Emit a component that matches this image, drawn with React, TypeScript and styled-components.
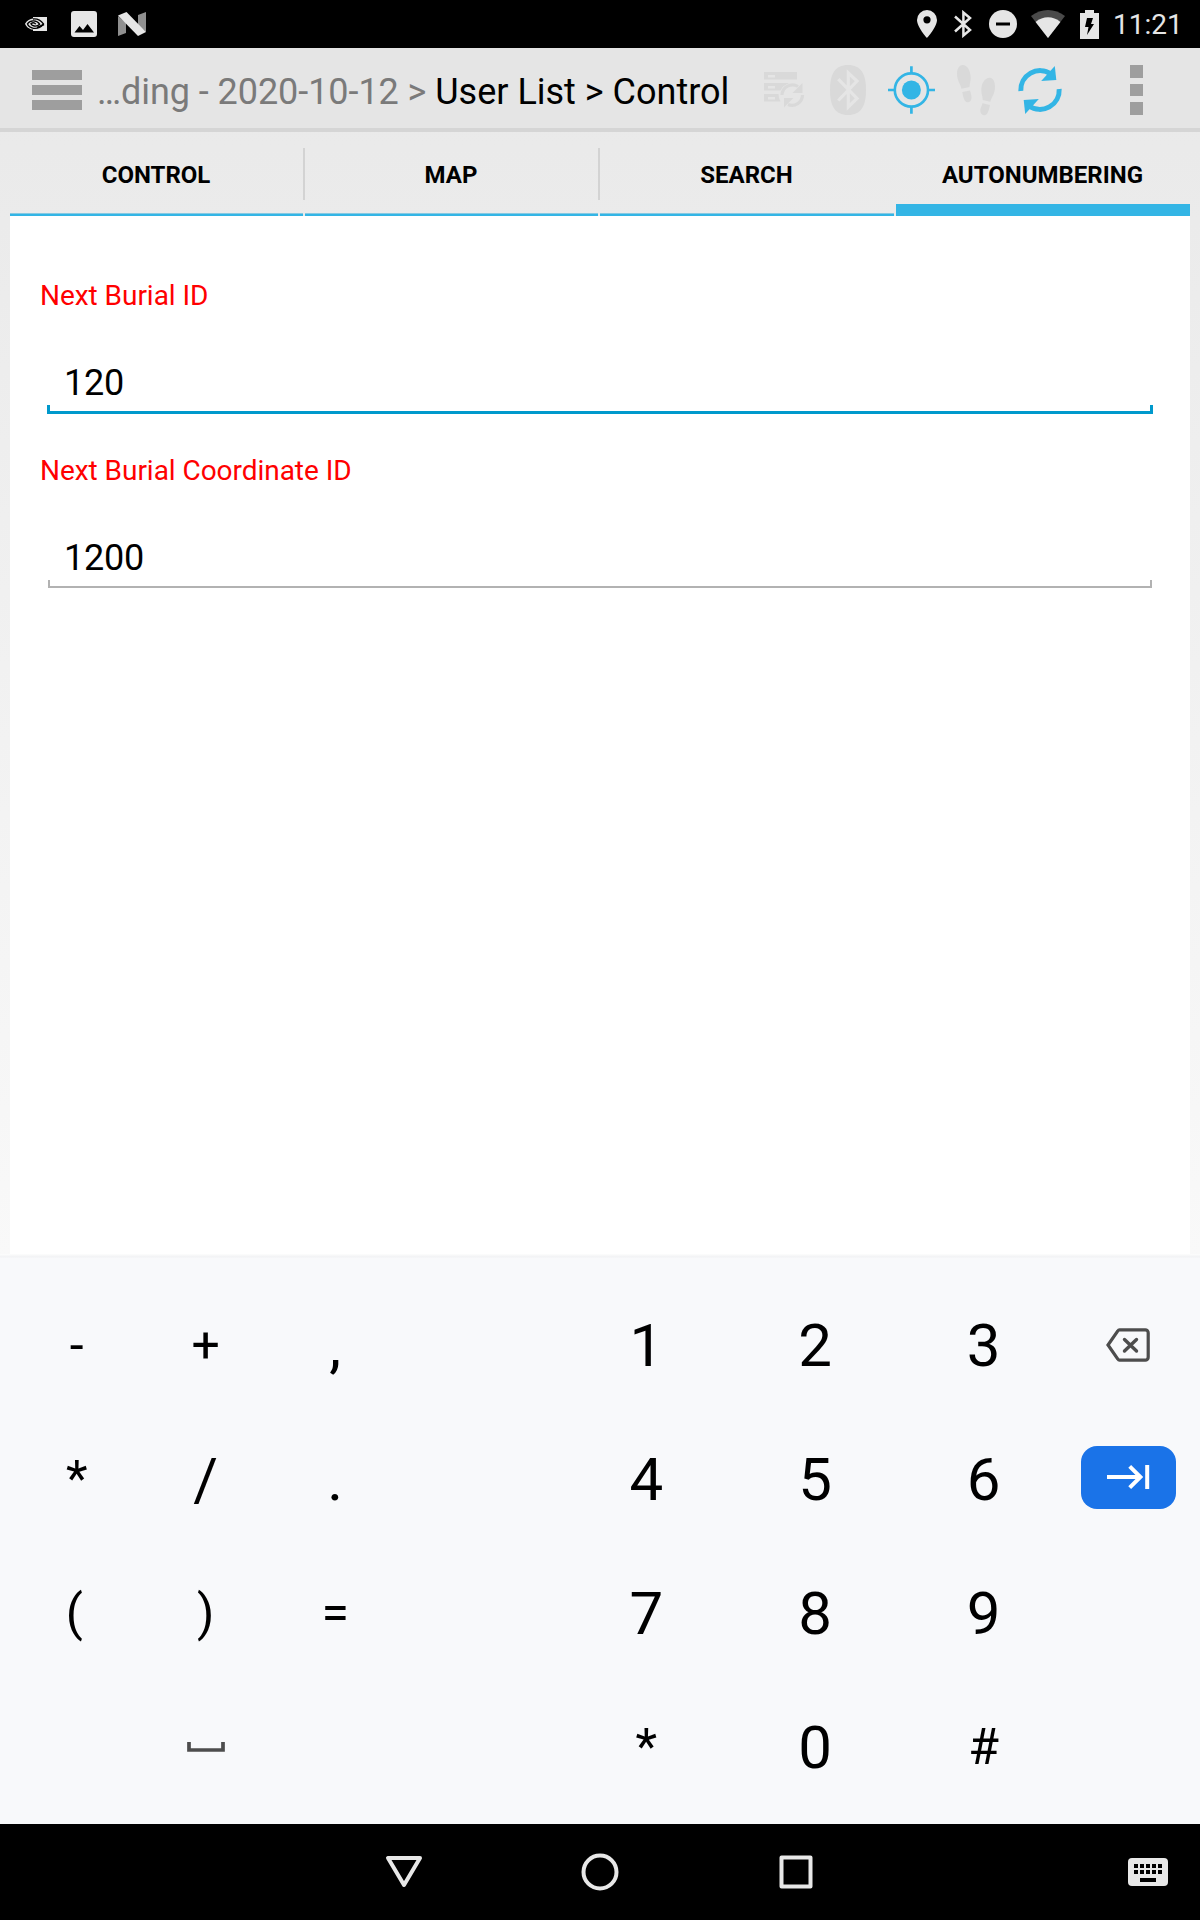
import React from "react";
import styled, { createGlobalStyle } from "styled-components";

const GlobalStyle = createGlobalStyle`
  *, *::before, *::after { box-sizing: border-box; }
  body { margin: 0; background: #000; }
`;

const Screen = styled.div`
  display: flex;
  flex-direction: column;
  width: 1200px;
  height: 1920px;
  overflow: hidden;
  font-family: Roboto, "Liberation Sans", sans-serif;
  color: #000;
  background: linear-gradient(#e8e8e8, #f9f9f9 1258px);
`;

const StatusBar = styled.div`
  display: flex;
  justify-content: space-between;
  height: 48px;
  padding: 0 16px 0 25px;
  background: #000;
`;

const StatusGroup = styled.div`
  display: flex;
  align-items: center;
`;

const StatusIcon = styled.svg<{ $gap?: number }>`
  display: block;
  flex: none;
  margin-right: ${(p) => p.$gap ?? 0}px;
  fill: #e6e6e6;
`;

const Clock = styled.span`
  width: 71px;
  font-size: 28px;
  line-height: 48px;
  color: #e6e6e6;
  padding-top: 2px;
`;

const ActionBar = styled.header`
  display: flex;
  height: 84px;
  background: #e5e5e5;
  border-bottom: 4px solid #d5d5d5;
`;

const MenuButton = styled.div`
  display: flex;
  flex-direction: column;
  gap: 5px;
  width: 97px;
  padding: 22px 0 0 32px;
`;

const MenuLine = styled.span`
  width: 50px;
  height: 10px;
  background: #9e9e9e;
`;

const Breadcrumb = styled.div`
  flex: 1;
  font-size: 36px;
  line-height: 42px;
  padding-top: 23px;
  white-space: nowrap;
`;

const Crumb = styled.span<{ $muted?: boolean }>`
  color: ${(p) => (p.$muted ? "#7a7a7a" : "#000")};
  letter-spacing: ${(p) => (p.$muted ? "-0.06px" : "0")};
`;

const Actions = styled.div`
  display: flex;
`;

const ActionIcon = styled.svg`
  display: block;
  width: 64px;
  height: 80px;
`;

const Overflow = styled.div`
  display: flex;
  flex-direction: column;
  align-items: center;
  gap: 6px;
  width: 128px;
  padding-top: 17px;
`;

const OverflowDot = styled.span`
  width: 13px;
  height: 12.7px;
  background: #9e9e9e;
`;

const Tabs = styled.nav`
  display: grid;
  grid-template-columns: 293px 293px 294px 294px;
  column-gap: 2px;
  height: 84px;
  margin: 0 10px;
`;

const Tab = styled.div<{ $active?: boolean }>`
  position: relative;
  display: flex;
  justify-content: center;
  padding: 29px 1px 0 0;
  font-size: 24px;
  line-height: 28px;
  font-weight: 700;
  border-bottom: ${(p) => (p.$active ? 12 : 2)}px solid #33b5e5;
  box-shadow: ${(p) => (p.$active ? "none" : "inset 0 -1px #85c9e2")};

  & + &::before {
    content: "";
    position: absolute;
    left: -2px;
    top: 16px;
    width: 2px;
    height: 52px;
    background: #d3d3d3;
  }
`;

const Form = styled.main`
  flex: 1;
  margin: 0 10px;
  padding: 63px 37px 0 30px;
  background: #fff;
`;

const Field = styled.div`
  height: 175px;
`;

const Label = styled.div`
  font-size: 28px;
  line-height: 34px;
  letter-spacing: -0.04px;
  color: #f00;
`;

const Value = styled.div<{ $focused?: boolean }>`
  height: ${(p) => (p.$focused ? 101 : 100)}px;
  margin: 0 ${(p) => (p.$focused ? "0 0 7px" : "1px 0 8px")};
  padding: 49px 0 0 ${(p) => (p.$focused ? 17 : 16)}px;
  font-size: 36px;
  line-height: 42px;
  letter-spacing: -0.2px;
  --line: ${(p) => (p.$focused ? "#0099cc" : "#b2b2b2")};
  --w: ${(p) => (p.$focused ? 3 : 2)}px;
  --tick: ${(p) => (p.$focused ? 9 : 8)}px;
  background:
    linear-gradient(var(--line), var(--line)) left bottom / 100% var(--w) no-repeat,
    linear-gradient(var(--line), var(--line)) left bottom / var(--w) var(--tick) no-repeat,
    linear-gradient(var(--line), var(--line)) right bottom / var(--w) var(--tick) no-repeat;
`;

const Keyboard = styled.section`
  display: grid;
  grid-template-columns: 128.5px 129.5px 129.5px 162px 168.7px 168.7px 168.7px 1fr;
  grid-template-rows: repeat(4, 134px);
  height: 570px;
  padding: 24px 11px 0 12.500px;
  background: linear-gradient(#fdfdfd, #f1f2f4 3px, #f8f9fb 4px);
`;

const Key = styled.div<{ $size: number; $shift: number }>`
  display: flex;
  align-items: center;
  justify-content: center;
  padding-top: ${(p) => (p.$size === 60 ? 2 : 0)}px;
  padding-right: ${(p) => p.$shift}px;
  font-size: ${(p) => p.$size}px;
  line-height: 1;
`;

const NextKey = styled.div`
  display: flex;
  align-items: center;
  justify-content: center;
  flex: none;
  width: 95px;
  height: 63px;
  margin-bottom: 4px;
  border-radius: 16px;
  background: #1a73e8;
`;

const NavBar = styled.footer`
  display: grid;
  grid-template-columns: 306px 196px 196px 196px 202px 104px;
  align-items: center;
  justify-items: center;
  height: 96px;
  background: #000;
`;

const NavIcon = styled.svg<{ $column: number }>`
  grid-column: ${(p) => p.$column};
  display: block;
  fill: none;
  stroke: #e8e8e8;
  stroke-width: 4;
  stroke-linejoin: round;
`;

const DISABLED = "#d9d9d9";
const ACCENT = "#33b5e5";

const NvidiaIcon = () => (
  <StatusIcon width="22" height="14" viewBox="0 0 22 14" $gap={24}>
    <path d="M8 0H22V14H8V12.6C4 12.2 1 9.6 0 6.7 2 3.700 5 1.900 8 1.600Z" />
    <g fill="none" stroke="#000" strokeWidth="1.300">
      <path d="M8 2C13 1.500 16.500 4.200 18.500 7 16 10 12 11.800 8.500 11.300 5.500 10.900 3.200 9 2.400 6.800 4 4.700 6.300 3.800 8.600 3.900 11.500 4 13.600 5.600 14.600 7.200 13 8.900 11 9.400 9.200 9 7.500 8.600 6.300 7.600 5.900 6.700 7.500 5.500 9.500 5.600 10.800 7.100" />
    </g>
    <path d="M12 10.500 19 7.500" stroke="#000" strokeWidth="1.500" />
  </StatusIcon>
);

const PictureIcon = () => (
  <StatusIcon width="26" height="26" viewBox="0 0 26 26" $gap={21}>
    <path fillRule="evenodd" d="M3 0H23A3 3 0 0 1 26 3V23A3 3 0 0 1 23 26H3A3 3 0 0 1 0 23V3A3 3 0 0 1 3 0ZM3.500 21.500H23L16.500 13 12 19 8.500 15Z" />
  </StatusIcon>
);

const NougatIcon = () => (
  <StatusIcon width="28" height="24" viewBox="0 0 28 24">
    <path fill="#8f8f8f" d="M0 4 8 11V21L0 24ZM20 3 28 0V20L20 13Z" />
    <path d="M0 3.500 8.500 0 28 20 20 24Z" />
  </StatusIcon>
);

const PinIcon = () => (
  <StatusIcon width="20" height="28" viewBox="0 0 20 28" $gap={17}>
    <path fillRule="evenodd" d="M10 0A10 10 0 0 0 0 10C0 17 10 28 10 28S20 17 20 10A10 10 0 0 0 10 0ZM10 6.200A3.600 3.600 0 1 1 10 13.400A3.600 3.600 0 0 1 10 6.200Z" />
  </StatusIcon>
);

const BluetoothStatusIcon = () => (
  <StatusIcon width="18" height="28" viewBox="0 0 18 28" $gap={17}>
    <path d="M1 6.500 16 20 9.400 25.500V2.500L16 8 1 21.500" fill="none" stroke="#e6e6e6" strokeWidth="2.500" />
  </StatusIcon>
);

const DoNotDisturbIcon = () => (
  <StatusIcon width="28" height="28" viewBox="0 0 28 28" $gap={14}>
    <circle cx="14" cy="14" r="14" />
    <path d="M7 12.500H21V15.500H7Z" fill="#000" />
  </StatusIcon>
);

const WifiIcon = () => (
  <StatusIcon width="34" height="28" viewBox="0 0 34 28" $gap={15}>
    <path d="M17 28 0 6C10 -2 24 -2 34 6Z" fill="#4a4a4a" />
    <path d="M17 28 4.600 12C12 5.800 22 5.800 29.400 12Z" />
  </StatusIcon>
);

const BatteryIcon = () => (
  <StatusIcon width="19" height="29" viewBox="0 0 19 29" $gap={14}>
    <path d="M5 0H14V3H19V29H0V3H5Z" />
    <path d="M7 8H13L11 14H14L7 25 8.500 17H5Z" fill="#000" />
  </StatusIcon>
);

const ServerSyncIcon = () => (
  <ActionIcon viewBox="0 0 64 80" fill={DISABLED}>
    <path fillRule="evenodd" d="M12 24H45V31.500H12ZM16 27V29.500H23V27ZM12 35H37L31 38.500 28.500 42.500H12ZM16 38V40.500H23V38ZM12 46H26.500L27 50 28.500 53.500H12ZM16 49V51.500H23V49Z" />
    <path d="M30 47A10.500 10.500 0 0 1 46 38.500M50.500 47A10.500 10.500 0 0 1 36 56.500" fill="none" stroke={DISABLED} strokeWidth="3.200" />
    <path d="M50.500 35V45H40.500ZM32 59.500V50H41.500Z" />
  </ActionIcon>
);

const BluetoothIcon = () => (
  <ActionIcon viewBox="0 0 64 80">
    <path d="M32 17C45 17 50 26 50 42S45 67 32 67 14 58 14 42 19 17 32 17Z" fill={DISABLED} />
    <path d="M22.300 31.200 41 50.500 32.300 59V25L41 33 22.300 52.500" fill="none" stroke="#e5e5e5" strokeWidth="3.200" />
  </ActionIcon>
);

const LocateIcon = () => (
  <ActionIcon viewBox="0 0 64 80">
    <circle cx="31.400" cy="42" r="9.500" fill={ACCENT} />
    <circle cx="31.400" cy="42" r="16.600" fill="none" stroke={ACCENT} strokeWidth="2.600" />
    <path d="M31.400 18.300V25M31.400 59V65.700M8 42H15M48 42H55" stroke={ACCENT} strokeWidth="2.700" />
  </ActionIcon>
);

const FootstepsIcon = () => (
  <ActionIcon viewBox="0 0 64 80" fill={DISABLED}>
    <path d="M18.500 17C22.500 16.600 26.700 22 26.700 30 26.700 33.500 25.400 36 25.500 39L17.500 40.700C16.500 36 13 32.500 13 26 13 21 15 17.300 18.500 17Z" />
    <path d="M18.300 44 26 42.500C27 46 27.700 47.500 27.500 50 27.300 53 25.500 54.300 23.500 54.200 20.500 54 19.300 50 18.300 44Z" />
    <path d="M46 29.700C49.500 30 51 34 51 39 51 46 47.500 49 46.300 53.700L38.700 52C38.800 48.500 37.300 46 37.300 42 37.300 34.500 41.500 29.300 46 29.700Z" />
    <path d="M38.500 55.300 46 57C44.800 63 43.500 67.200 40.500 67.200 38 67.200 36.300 65.500 36.300 62.500 36.300 60 37.700 58.500 38.500 55.300Z" />
  </ActionIcon>
);

const RefreshIcon = () => (
  <ActionIcon viewBox="0 0 64 80">
    {[0, 180].map((angle) => (
      <g key={angle} transform={`rotate(${angle} 32 42)`}>
        <path d="M12.800 43A19.300 19.300 0 0 1 43 26" fill="none" stroke={ACCENT} strokeWidth="5" />
        <path d="M46.800 18 48.300 32 33.200 33Z" fill={ACCENT} />
      </g>
    ))}
  </ActionIcon>
);

const SpaceIcon = () => (
  <svg width="38" height="10" viewBox="0 0 38 10">
    <path d="M2 0V8H36V0" fill="none" stroke="#4d4d4d" strokeWidth="3.700" />
  </svg>
);

const BackspaceIcon = () => (
  <svg width="44" height="34" viewBox="0 0 44 34" fill="none" stroke="#4d4d4d" strokeWidth="3.200">
    <path d="M13.500 1.800H39A3 3 0 0 1 42.200 5V29A3 3 0 0 1 39 32.200H13.500Q12.500 32.200 11.800 31L2 17 11.800 3Q12.500 1.800 13.500 1.800Z" />
    <path d="M18.500 11.500 30.500 23M30.500 11.500 18.500 23" strokeWidth="3.400" strokeLinecap="round" />
  </svg>
);

const TabArrowIcon = () => (
  <svg width="43" height="26" viewBox="0 0 43 26" fill="none" stroke="#fff" strokeWidth="4">
    <path d="M0 13H33M22.700 2.300 33.400 13 22.700 23.700M40.200 1V25" />
  </svg>
);

const KEY_ROWS: string[][] = [
  ["-", "+", ",", "", "1", "2", "3", "backspace"],
  ["*", "/", ".", "", "4", "5", "6", "next"],
  ["(", ")", "=", "", "7", "8", "9", ""],
  ["", "space", "", "", "*", "0", "#", ""],
];

/* Extra right padding that nudges a glyph off its column's centre. */
const KEY_SHIFT: Record<string, number> = { "(": 5, backspace: 2 };

const keySize = (key: string) => (/^[\d,./]$/.test(key) ? 60 : 50);

const keyContent = (key: string) => {
  if (key === "backspace") return <BackspaceIcon />;
  if (key === "space") return <SpaceIcon />;
  if (key === "next") return <NextKey><TabArrowIcon /></NextKey>;
  return key;
};

export default function App() {
  return (
    <>
      <GlobalStyle />
      <Screen>
        <StatusBar>
          <StatusGroup>
            <NvidiaIcon />
            <PictureIcon />
            <NougatIcon />
          </StatusGroup>
          <StatusGroup>
            <PinIcon />
            <BluetoothStatusIcon />
            <DoNotDisturbIcon />
            <WifiIcon />
            <BatteryIcon />
            <Clock>11:21</Clock>
          </StatusGroup>
        </StatusBar>

        <ActionBar>
          <MenuButton>
            <MenuLine />
            <MenuLine />
            <MenuLine />
          </MenuButton>
          <Breadcrumb>
            <Crumb $muted>…ding - 2020-10-12 &gt; </Crumb>
            <Crumb>User List &gt; Control</Crumb>
          </Breadcrumb>
          <Actions>
            <ServerSyncIcon />
            <BluetoothIcon />
            <LocateIcon />
            <FootstepsIcon />
            <RefreshIcon />
          </Actions>
          <Overflow>
            <OverflowDot />
            <OverflowDot />
            <OverflowDot />
          </Overflow>
        </ActionBar>

        <Tabs>
          <Tab>CONTROL</Tab>
          <Tab>MAP</Tab>
          <Tab>SEARCH</Tab>
          <Tab $active>AUTONUMBERING</Tab>
        </Tabs>

        <Form>
          <Field>
            <Label>Next Burial ID</Label>
            <Value $focused>120</Value>
          </Field>
          <Field>
            <Label>Next Burial Coordinate ID</Label>
            <Value>1200</Value>
          </Field>
        </Form>

        <Keyboard>
          {KEY_ROWS.flatMap((row, r) =>
            row.map((key, c) => (
              <Key key={`${r}-${c}`} $size={keySize(key)} $shift={KEY_SHIFT[key] ?? 0}>
                {keyContent(key)}
              </Key>
            ))
          )}
        </Keyboard>

        <NavBar>
          <NavIcon $column={2} width="38" height="34" viewBox="0 0 38 34">
            <path d="M3 3H35L19 30Z" />
          </NavIcon>
          <NavIcon $column={3} width="38" height="38" viewBox="0 0 38 38">
            <circle cx="19" cy="19" r="16.500" />
          </NavIcon>
          <NavIcon $column={4} width="34" height="34" viewBox="0 0 34 34">
            <rect x="2.500" y="2.500" width="29" height="29" />
          </NavIcon>
          <NavIcon $column={6} width="40" height="28" viewBox="0 0 40 28">
            <rect width="40" height="28" rx="4" fill="#e8e8e8" stroke="none" />
            <path d="M6 8H34M6 14H34" stroke="#000" strokeDasharray="4 2" />
            <path d="M12 22H28" stroke="#000" />
          </NavIcon>
        </NavBar>
      </Screen>
    </>
  );
}
